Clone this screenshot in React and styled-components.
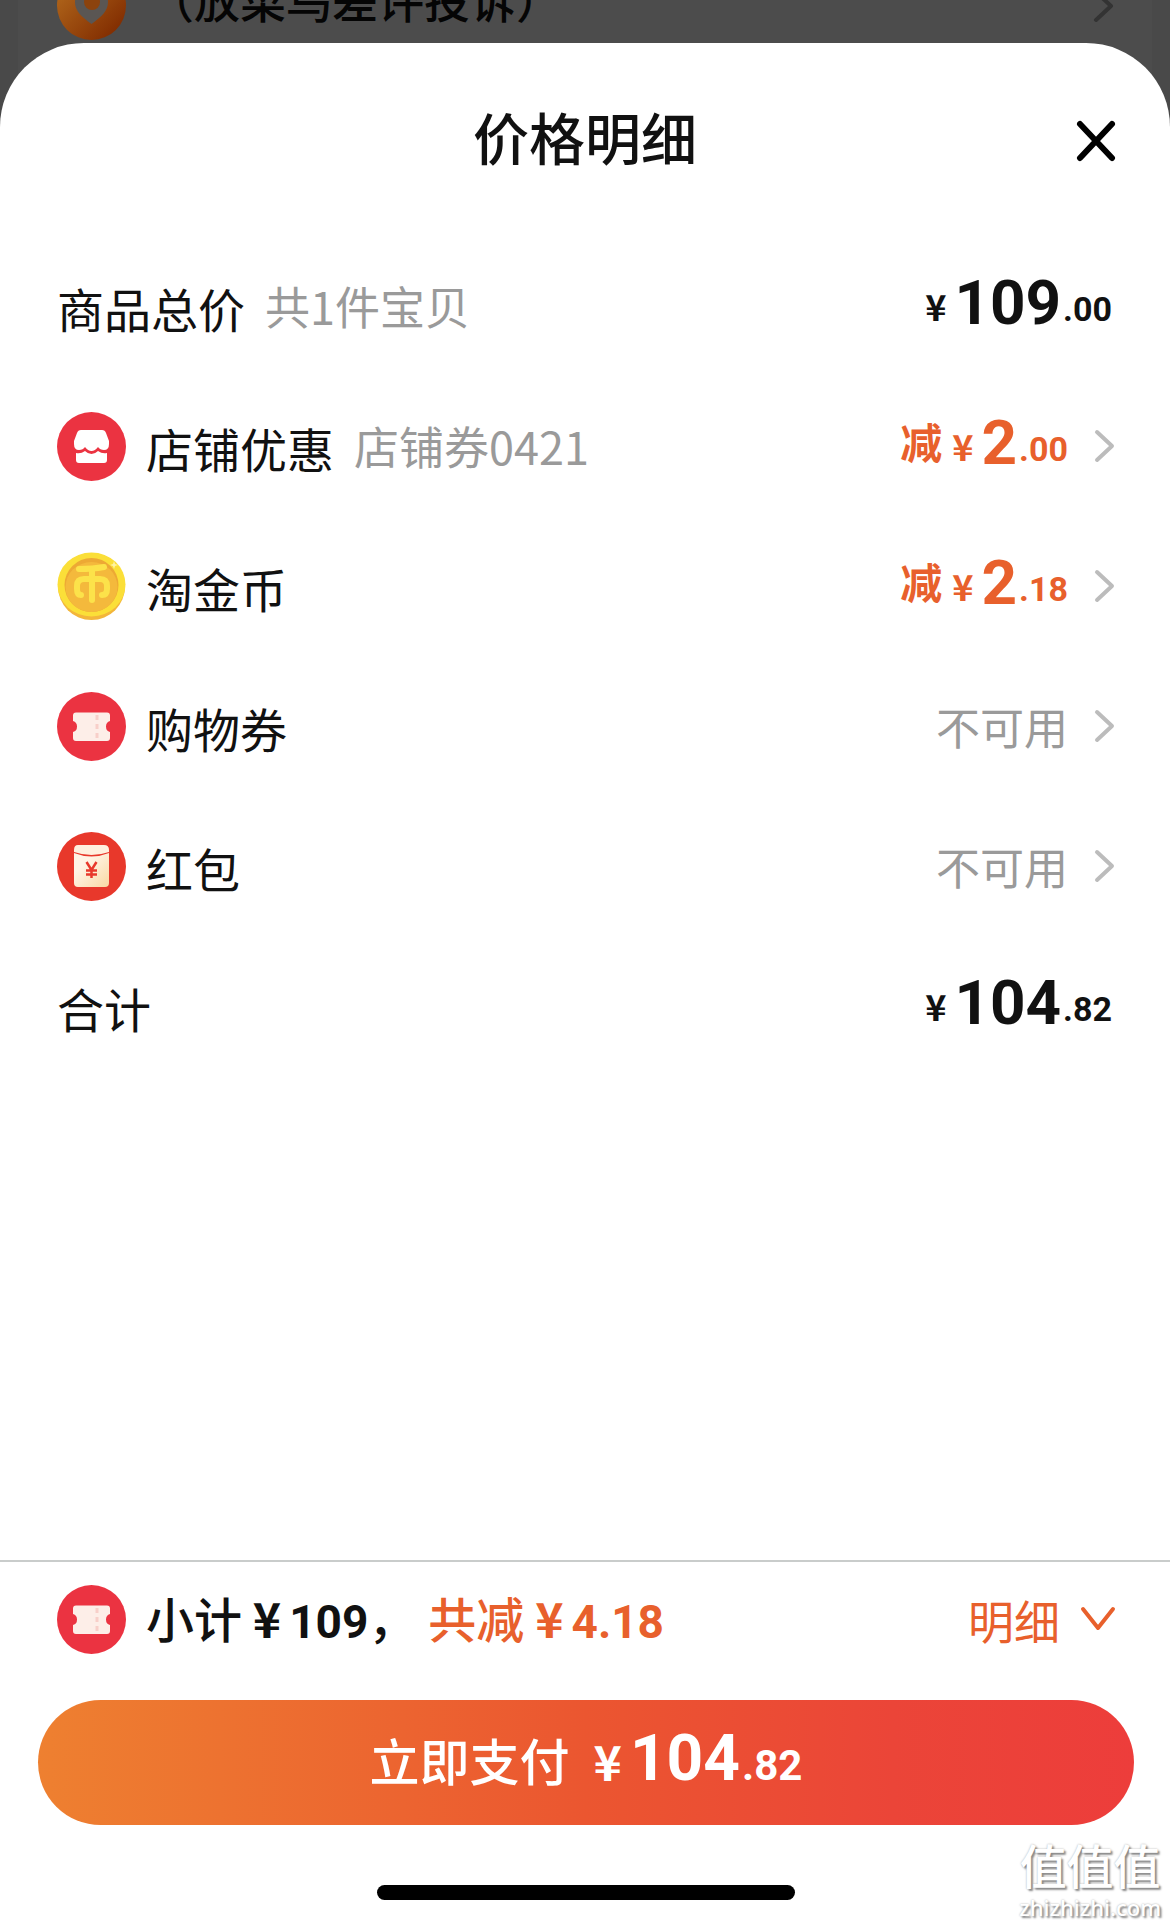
import React from 'react';
import styled, { createGlobalStyle } from 'styled-components';

const GlobalStyle = createGlobalStyle`
    * {
        box-sizing: border-box;
    }

    body {
        margin: 0;
        background: #4c4c4c;
        color: #111111;
        font-family: "Noto Sans CJK SC", sans-serif;
    }

    button {
        border: none;
        padding: 0;
        background: none;
        font-family: inherit;
        cursor: pointer;
    }

    svg {
        display: block;
        flex: none;
    }
`;

const Page = styled.div`
    display: flex;
    flex-direction: column;
    min-height: 100vh;
    background: #494949;
`;

// the card keeps going behind the rounded corners of the sheet
const Backdrop = styled.div`
    display: flex;
    align-items: flex-end;
    gap: 22px;
    height: 127px;
    margin: 0 18px -84px;
    padding: 0 37px 87px 39px;
    overflow: hidden;
    background: #4c4c4c;
`;

const BackdropText = styled.div`
    flex: 1;
    padding-bottom: 12px;
    font-size: 46px;
    line-height: 60px;
    font-weight: 500;
    color: #050505;
`;

const BackdropArrow = styled.div`
    padding-bottom: 16px;
`;

const Sheet = styled.section`
    position: relative;
    display: flex;
    flex: 1;
    flex-direction: column;
    border-radius: 84px 84px 0 0;
    background: #ffffff;
`;

const Header = styled.header`
    display: grid;
    grid-template-columns: 1fr auto 1fr;
    align-items: center;
    padding: 48px 53px 45px;
`;

const Title = styled.h2`
    grid-column: 2;
    margin: 0;
    padding-bottom: 10px;
    font-size: 56px;
    line-height: 90px;
    font-weight: 500;
`;

const CloseButton = styled.button`
    justify-self: end;
`;

const List = styled.ul`
    flex: 1;
    margin: 0;
    padding: 0;
    list-style: none;
`;

const Row = styled.li`
    display: flex;
    align-items: center;
    height: 140px;
    padding: 0 54px 0 57px;
`;

const RowIcon = styled.span`
    margin-right: 20px;
`;

const Label = styled.span`
    padding-top: 4px;
    font-size: 47px;
    line-height: 64px;
`;

const Note = styled.span`
    margin-left: 20px;
    font-size: 45px;
    line-height: 64px;
    color: #9a9a9a;
`;

const RowValue = styled.div`
    display: flex;
    align-items: center;
    margin-left: auto;
    padding-right: 4px;
`;

const RowButton = styled.button`
    display: flex;
    align-items: center;
    gap: 26px;
    margin-left: auto;
    color: ${props => (props.$muted ? '#9a9a9a' : '#e8602c')};
    font-size: 44px;
    line-height: 64px;
`;

const Price = styled.span`
    display: flex;
    align-items: flex-end;
    padding-bottom: ${props => (props.$large ? '0' : '6px')};
    font-family: Roboto, sans-serif;
    font-weight: 700;
`;

const Prefix = styled.span`
    margin-right: 10px;
    padding-bottom: 8px;
    font-family: "Noto Sans CJK SC", sans-serif;
    font-size: 42px;
    line-height: 60px;
`;

const Yen = styled.span`
    margin-right: 8px;
    font-family: "Noto Sans CJK SC", sans-serif;
    font-size: ${props => (props.$large ? '48px' : '36px')};
    line-height: ${props => (props.$large ? '70px' : '68px')};
`;

const Whole = styled.span`
    font-size: ${props => (props.$large ? '64px' : '62px')};
    line-height: 72px;
`;

const Cents = styled.span`
    margin-left: 2px;
    font-size: ${props => (props.$large ? '42px' : '34px')};
    line-height: ${props => (props.$large ? '58px' : '60px')};
`;

const Footer = styled.footer`
    border-top: 2px solid #c9cccb;
    padding: 12px 36px 24px 38px;
`;

const Summary = styled.div`
    display: flex;
    align-items: center;
    padding: 0 18px 0 19px;
    height: 90px;
`;

const SummaryText = styled.span`
    margin-right: 12px;
    font-size: 48px;
    line-height: 64px;
    font-weight: 500;
    color: ${props => (props.$accent ? '#e8602c' : '#111111')};
`;

const SummaryPrice = styled.b`
    font-weight: 700;
`;

const SummaryNumber = styled.span`
    margin-left: 8px;
    font-family: Roboto, sans-serif;
    font-size: 46px;
`;

const DetailButton = styled.button`
    display: flex;
    align-items: center;
    gap: 20px;
    margin-left: auto;
    color: #e8602c;
    font-size: 46px;
    line-height: 64px;
`;

const PayButton = styled.button`
    display: flex;
    align-items: center;
    justify-content: center;
    gap: 24px;
    width: 100%;
    height: 125px;
    margin-top: 36px;
    padding-bottom: 8px;
    border-radius: 63px;
    background: linear-gradient(90deg, #ee8030 0%, #eb5630 50%, #eb4538 78%, #ed3d3b 100%);
    color: #ffffff;
    font-size: 50px;
    line-height: 64px;
    font-weight: 500;
`;

const HomeBar = styled.div`
    width: 418px;
    height: 15px;
    margin: 60px auto 0;
    border-radius: 8px;
    background: #000000;
`;

const Watermark = styled.div`
    position: absolute;
    right: 9px;
    bottom: 2px;
    color: #ffffff;
    font-size: 47px;
    line-height: 56px;
    font-weight: 500;
    text-align: center;
    text-shadow: 2px 2px 2px #888888, 0 0 2px #aaaaaa;
`;

const WatermarkSite = styled.div`
    font-family: "Noto Sans", sans-serif;
    font-size: 22px;
    line-height: 30px;
`;

const Arrow = ({ color = '#bcbcbc' }) => (
    <svg width="22" height="36" viewBox="0 0 22 36" fill="none" stroke={color} strokeWidth="4" strokeLinecap="round" strokeLinejoin="round">
        <path d="M3 4 18 18 3 32" />
    </svg>
);

const PinIcon = () => (
    <svg width="69" height="69" viewBox="0 0 69 69">
        <defs>
            <linearGradient id="pin" x1="0" y1="0" x2="1" y2="1">
                <stop offset="0.2" stopColor="#ad6219" />
                <stop offset="0.9" stopColor="#802b00" />
            </linearGradient>
        </defs>
        <circle cx="34.5" cy="34.5" r="34.5" fill="url(#pin)" />
        <path d="M34.5 53C24 45 18 40 18 31a16.500 16.500 0 0 1 33 0c0 9-6 14-16.500 22Z" fill="#5a5653" />
        <circle cx="35" cy="31" r="8" fill="#8c430d" />
    </svg>
);

const ShopIcon = () => (
    <svg width="69" height="69" viewBox="0 0 69 69">
        <circle cx="34.5" cy="34.5" r="34.5" fill="#eb3341" />
        <path d="M24 18h21q3 0 4 3l3 8v3q0 6-5 6-4 0-6-3-3 4-6.500 4T28 35q-2 3-6 3-5 0-5-6v-3l3-8q1-3 4-3Z" fill="#fff" />
        <path d="M19 41q5 1 9-2 3 3 6.500 3t6.500-3q4 3 9 2v7q0 3-3 3H22q-3 0-3-3Z" fill="#fff" />
    </svg>
);

const CoinIcon = () => (
    <svg width="69" height="69" viewBox="0 0 69 69">
        <circle cx="34.5" cy="34.5" r="33.5" fill="#f3b63b" />
        <ellipse cx="34.5" cy="32.5" rx="34" ry="32" fill="#fbdf38" />
        <circle cx="34.5" cy="33" r="27" fill="#eda934" />
        <ellipse cx="34.5" cy="35" rx="26" ry="25" fill="#f4b93c" />
        <g fill="none" stroke="#fce24a" strokeWidth="6" strokeLinecap="round" strokeLinejoin="round">
            <path d="M22 17Q36 17 47 15" />
            <path d="M35 17V48" />
            <path d="M24 43Q20 43 20 37V34Q20 27 27 27H43Q50 27 50 34V37Q50 43 45 43" />
        </g>
        <path d="M57 9l1 3 3 1-3 1-1 3-1-3-3-1 3-1Z" fill="#fff3a6" />
    </svg>
);

const TicketIcon = () => (
    <svg width="69" height="69" viewBox="0 0 69 69">
        <circle cx="34.5" cy="34.5" r="34.5" fill="#eb3341" />
        <path d="M19 20.500H50Q53 20.500 53 23.500V29Q49 30 49 34.500T53 40V46Q53 49 50 49H19Q16 49 16 46V40Q20 39 20 34.500T16 29V23.500Q16 20.500 19 20.500Z" fill="#fdeee8" />
        <path d="M40 23V47" stroke="#f8cfc9" strokeWidth="3" strokeDasharray="5 4" />
    </svg>
);

const PacketIcon = () => (
    <svg width="69" height="69" viewBox="0 0 69 69">
        <defs>
            <linearGradient id="packet" x1="0" y1="0" x2="1" y2="1">
                <stop offset="0.3" stopColor="#fff4e6" />
                <stop offset="1" stopColor="#f9d8a2" />
            </linearGradient>
        </defs>
        <circle cx="34.5" cy="34.5" r="34.5" fill="#e8382b" />
        <path d="M21 13H47Q52 13 52 18V20Q34.500 26 17 20V18Q17 13 21 13Z" fill="#fff0df" />
        <path d="M17 21Q34.500 28 52 21V51Q52 55 48 55H21Q17 55 17 51Z" fill="url(#packet)" />
        <path d="M29.500 30l5 8 5-8M34.500 38V46M29 38.500H40M29 42.500H40" fill="none" stroke="#e8382b" strokeWidth="2.500" />
    </svg>
);

const Amount = ({ prefix, whole, cents, large }) => (
    <Price $large={large}>
        {prefix && <Prefix>{prefix}</Prefix>}
        <Yen $large={large}>¥</Yen>
        <Whole $large={large}>{whole}</Whole>
        <Cents $large={large}>.{cents}</Cents>
    </Price>
);

const discounts = [
    { label: '店铺优惠', note: '店铺券0421', icon: <ShopIcon />, whole: '2', cents: '00' },
    { label: '淘金币', icon: <CoinIcon />, whole: '2', cents: '18' },
    { label: '购物券', icon: <TicketIcon /> },
    { label: '红包', icon: <PacketIcon /> },
];

class PriceDetail extends React.Component {
    render() {
        return (
            <Page>
                <GlobalStyle />
                <Backdrop>
                    <PinIcon />
                    <BackdropText>（放菜鸟差评投诉）</BackdropText>
                    <BackdropArrow>
                        <Arrow color="#333333" />
                    </BackdropArrow>
                </Backdrop>

                <Sheet>
                    <Header>
                        <Title>价格明细</Title>
                        <CloseButton aria-label="关闭">
                            <svg width="42" height="42" viewBox="0 0 42 42" stroke="#000" strokeWidth="6" strokeLinecap="round">
                                <path d="M5 4 37 38M37 4 5 38" />
                            </svg>
                        </CloseButton>
                    </Header>

                    <List>
                        <Row>
                            <Label>商品总价</Label>
                            <Note>共1件宝贝</Note>
                            <RowValue>
                                <Amount whole="109" cents="00" />
                            </RowValue>
                        </Row>

                        {discounts.map(item =>
                            <Row key={item.label}>
                                <RowIcon>{item.icon}</RowIcon>
                                <Label>{item.label}</Label>
                                {item.note && <Note>{item.note}</Note>}
                                <RowButton $muted={!item.whole}>
                                    {item.whole
                                        ? <Amount prefix="减" whole={item.whole} cents={item.cents} />
                                        : '不可用'}
                                    <Arrow />
                                </RowButton>
                            </Row>
                        )}

                        <Row>
                            <Label>合计</Label>
                            <RowValue>
                                <Amount whole="104" cents="82" />
                            </RowValue>
                        </Row>
                    </List>

                    <Footer>
                        <Summary>
                            <RowIcon><TicketIcon /></RowIcon>
                            <SummaryText>
                                小计 <SummaryPrice>¥<SummaryNumber>109</SummaryNumber></SummaryPrice>，
                            </SummaryText>
                            <SummaryText $accent>
                                共减 <SummaryPrice>¥<SummaryNumber>4.18</SummaryNumber></SummaryPrice>
                            </SummaryText>
                            <DetailButton>
                                明细
                                <svg width="36" height="26" viewBox="0 0 36 26" fill="none" stroke="#e8602c" strokeWidth="4" strokeLinecap="round" strokeLinejoin="round">
                                    <path d="M3 3 18 22 33 3" />
                                </svg>
                            </DetailButton>
                        </Summary>
                        <PayButton>
                            立即支付
                            <Amount whole="104" cents="82" large />
                        </PayButton>
                        <HomeBar />
                    </Footer>

                    <Watermark>
                        值值值
                        <WatermarkSite>zhizhizhi.com</WatermarkSite>
                    </Watermark>
                </Sheet>
            </Page>
        );
    }
}

export default PriceDetail;
